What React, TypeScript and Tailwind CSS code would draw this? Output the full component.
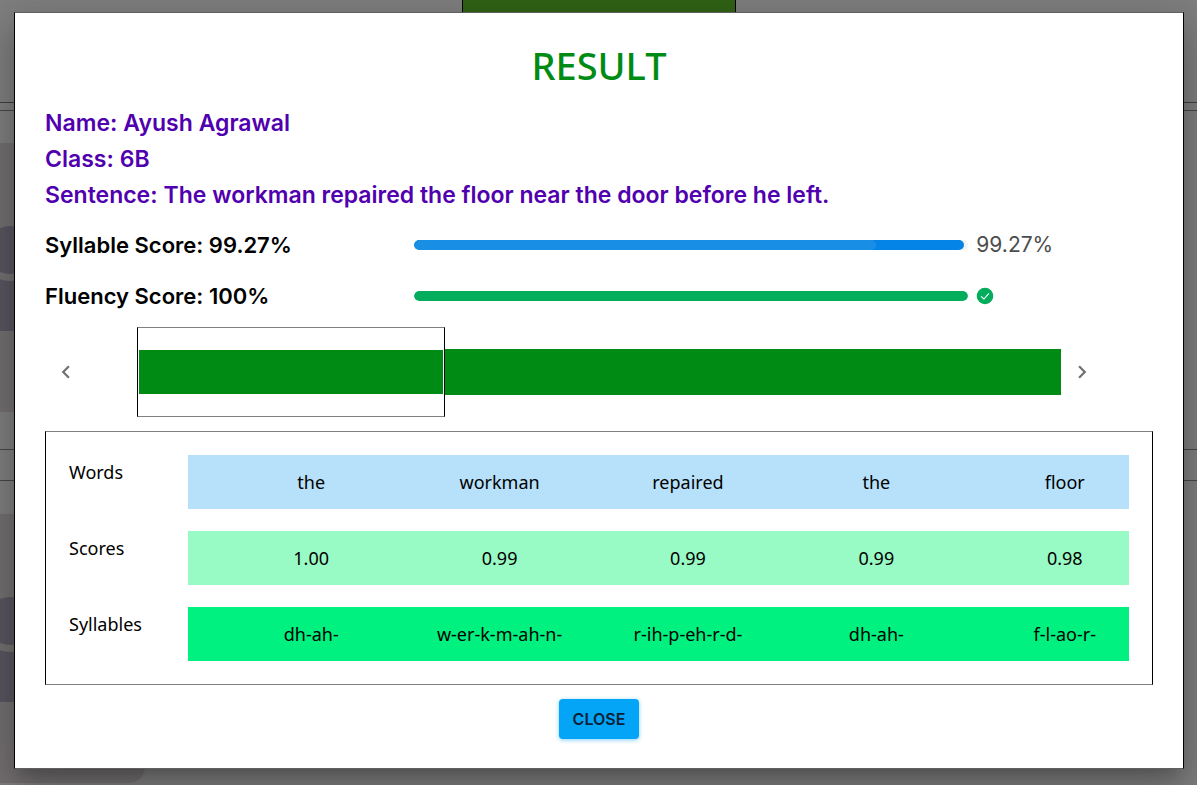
import { Fragment } from 'react';
import { MdChevronLeft, MdChevronRight } from 'react-icons/md';

const details = [
  { label: 'Name', value: 'Ayush Agrawal' },
  { label: 'Class', value: '6B' },
  { label: 'Sentence', value: 'The workman repaired the floor near the door before he left.' },
];

const rows = [
  { label: 'Words', tone: 'bg-[#b7e0fa]', cells: ['the', 'workman', 'repaired', 'the', 'floor'] },
  { label: 'Scores', tone: 'bg-[#98fac4]', cells: ['1.00', '0.99', '0.99', '0.99', '0.98'] },
  { label: 'Syllables', tone: 'bg-[#00f17f]', cells: ['dh-ah-', 'w-er-k-m-ah-n-', 'r-ih-p-eh-r-d-', 'dh-ah-', 'f-l-ao-r-'] },
];

function Avatar() {
  return (
    <div className="h-[269px] w-[145px] overflow-hidden rounded-r-2xl bg-[#e9e0e5]">
      <svg viewBox="0 0 145 269" className="h-full w-full" aria-hidden="true">
        <path d="M-60 188 V150 Q-60 131 -41 131 H61 Q80 131 80 150 V188 Z" fill="#b4acc2" />
        <circle cx="10" cy="107" r="31" fill="#e9e0e5" />
        <circle cx="10" cy="107" r="24" fill="#b4acc2" />
      </svg>
    </div>
  );
}

function PageBehind() {
  return (
    <div className="absolute inset-0 overflow-hidden bg-white" aria-hidden="true">
      <div className="flex h-[103px] justify-center border-b border-[#808080]">
        <div className="h-10 w-[274px] border-x border-black bg-[#62c62c]" />
      </div>
      <div className="flex flex-col gap-[30px] pt-[7px]">
        <div className="border-y border-[#909090] pt-8 pb-[37px]">
          <Avatar />
        </div>
        <div className="border-y border-[#909090] pt-[33px] pb-[37px]">
          <Avatar />
        </div>
      </div>
    </div>
  );
}

function ScoreBar({ label, name, value, display }: { label: string; name: string; value: number; display: string }) {
  const done = value >= 100;
  return (
    <div className="grid grid-cols-12 items-center">
      <p className="col-span-4 text-black">
        {label}: {display}
      </p>
      <div
        role="progressbar"
        aria-label={name}
        aria-valuenow={value}
        aria-valuemin={0}
        aria-valuemax={100}
        className="col-span-6 h-[10px] overflow-hidden rounded-full bg-[#f3f3f3]"
      >
        <div
          className={done ? 'h-full rounded-full bg-[#04ad5c]' : 'flex h-full overflow-hidden rounded-full bg-[#0484e6]'}
          style={{ width: `${value}%` }}
        >
          {!done && <div className="w-[84%] rounded-r-full bg-[#188ee4]" />}
        </div>
      </div>
      <div className="col-span-2 pl-2">
        {done ? (
          <svg viewBox="0 0 18 18" className="size-[18px]" role="img" aria-label="Complete">
            <circle cx="9" cy="9" r="8.3" fill="#04ad5c" />
            <path d="M5.1 9.4 L7.9 12 L12.9 6.4" fill="none" stroke="#fff" strokeWidth="1.1" />
          </svg>
        ) : (
          <span className="block text-[21px] font-normal text-[#4d4d4d]">{display}</span>
        )}
      </div>
    </div>
  );
}

export default function App() {
  return (
    <div className="relative min-h-screen overflow-hidden pt-3 pr-[13px] pb-4 pl-[14px] font-['Inter',sans-serif]">
      <PageBehind />
      <div className="absolute inset-0 bg-black/50" />
      <div
        role="dialog"
        aria-modal="true"
        aria-labelledby="result-title"
        className="relative border border-black border-y-[#606060] bg-white px-[30px] pt-6 pb-[29px] shadow-[0_11px_15px_-7px_rgba(0,0,0,0.2),0_24px_38px_3px_rgba(0,0,0,0.14),0_9px_46px_8px_rgba(0,0,0,0.12)]"
      >
        <h1 id="result-title" className="text-center font-['Noto_Sans',sans-serif] text-[38px] leading-[56px] font-medium text-[#008c14]">
          RESULT
        </h1>

        <dl className="mt-3 text-[23px] leading-9 font-semibold text-[#5000ae]">
          {details.map((item) => (
            <div key={item.label} className="flex gap-[6px]">
              <dt>{item.label}:</dt>
              <dd>{item.value}</dd>
            </div>
          ))}
        </dl>

        <div className="mt-[14px] flex flex-col gap-[15px] text-[22px] leading-9 font-semibold">
          <ScoreBar label="Syllable Score" name="Syllable score" value={99.27} display="99.27%" />
          <ScoreBar label="Fluency Score" name="Fluency score" value={100} display="100%" />
        </div>

        <div className="mt-[13px] grid grid-cols-12 items-center text-[#707070]">
          <button type="button" aria-label="Previous" className="ml-2 flex w-[26px] justify-center">
            <MdChevronLeft className="size-[26px]" />
          </button>
          <div className="col-span-10 grid grid-cols-3 items-center">
            <div className="flex h-[90px] items-center border border-black border-y-[#808080] px-px">
              <div className="h-11 flex-1 bg-[#008c14]" />
            </div>
            <div className="h-[46px] bg-[#008c14]" />
            <div className="h-[46px] bg-[#008c14]" />
          </div>
          <button type="button" aria-label="Next" className="ml-2 flex w-[26px] justify-center">
            <MdChevronRight className="size-[26px]" />
          </button>
        </div>

        <div className="mt-[14px] border border-black border-y-[#808080] px-[23px] py-[23px]">
          <div className="overflow-hidden">
            <table className="w-[calc(100%+30px)] table-fixed border-collapse font-['Noto_Sans',sans-serif] text-[18px] leading-[54px] text-black">
              <colgroup>
                <col className="w-[119px]" />
                <col className="w-[29px]" />
                <col span={5} />
              </colgroup>
              <tbody>
                {rows.map((row, index) => (
                  <Fragment key={row.label}>
                    {index > 0 && (
                      <tr aria-hidden="true">
                        <td colSpan={7} className="h-[22px] p-0" />
                      </tr>
                    )}
                    <tr>
                      <th scope="row" className="p-0 text-left align-top leading-[34px] font-normal">
                        {row.label}
                      </th>
                      <td className={row.tone} />
                      {row.cells.map((cell, i) => (
                        <td key={i} className={`p-0 text-center ${row.tone}`}>
                          {cell}
                        </td>
                      ))}
                    </tr>
                  </Fragment>
                ))}
              </tbody>
            </table>
          </div>
        </div>

        <div className="mt-[14px] flex justify-center">
          <button
            type="button"
            className="h-10 rounded-[4px] bg-[#04a4f6] px-[14px] text-[16px] font-semibold text-[#0c2236] shadow-[0_1px_4px_rgba(4,164,246,0.5)]"
          >
            CLOSE
          </button>
        </div>
      </div>
    </div>
  );
}
